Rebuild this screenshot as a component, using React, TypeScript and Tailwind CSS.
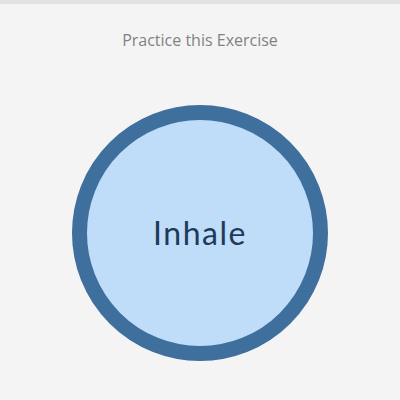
import React from 'react';

export default function App() {
  return (
    <div className="w-[400px] h-[400px] bg-[#f4f4f4] flex flex-col overflow-hidden">
      <div className="h-[4px] bg-[#e2e2e2]" />
      <div className="pt-[24px] flex justify-center">
        <h1 className="text-[16px] leading-[24px] text-[#828282] font-['Open_Sans',sans-serif]">
          Practice this Exercise
        </h1>
      </div>
      <div className="pt-[53px] flex justify-center">
        <div className="w-[256px] h-[256px] rounded-full border-[15px] border-[#3f6f9c] bg-[#bfdcf8] flex items-center justify-center">
          <span className="text-[32px] text-[#1d3a5b] font-['Lato',sans-serif] tracking-[1.5px]">
            Inhale
          </span>
        </div>
      </div>
    </div>
  );
}
